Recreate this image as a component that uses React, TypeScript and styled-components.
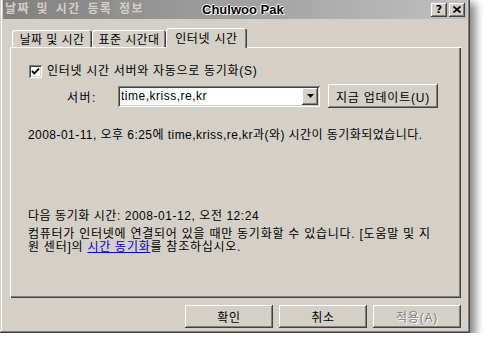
import React from "react";
import styled, { createGlobalStyle } from "styled-components";

const GlobalStyle = createGlobalStyle`
  html, body { margin: 0; padding: 0; background: #ffffff; overflow: hidden; }
  body { font-family: "Liberation Sans", "Noto Sans CJK KR", sans-serif; font-size: 12px; color: #000; }
`;

const raised = `
  box-shadow: inset -1px -1px #404040, inset 1px 1px #ffffff, inset -2px -2px #808080, inset 2px 2px #d4d0c8;
`;
const sunken = `
  box-shadow: inset 1px 1px #808080, inset -1px -1px #ffffff, inset 2px 2px #404040, inset -2px -2px #d4d0c8;
`;

const Window = styled.div`
  width: 470px;
  height: 336px;
  margin-top: -3px;
  box-sizing: border-box;
  padding: 3px;
  background: #d4d0c8;
  box-shadow: inset -1px -1px #404040, inset 1px 1px #d4d0c8, inset -2px -2px #808080, inset 2px 2px #ffffff,
    6px 6px 8px rgba(0, 0, 0, 0.45);
  display: flex;
  flex-direction: column;
`;

const TitleBar = styled.div`
  height: 19px;
  background: linear-gradient(to right, #808080, #c0c0c0);
  display: grid;
  grid-template-columns: 197px 1fr auto;
  align-items: center;
  padding: 0 2px 0 2px;
`;

const TitleText = styled.span`
  color: #d4d0c8;
  font-weight: bold;
  font-size: 12px;
  letter-spacing: 1.4px;
  word-spacing: 2px;
  white-space: nowrap;
  line-height: 19px;
`;

const OwnerName = styled.span`
  font-family: "Liberation Sans", sans-serif;
  font-weight: bold;
  font-size: 13px;
  color: #000;
  text-shadow: 1px 1px 0 #ffffff, -1px 0 0 #ffffff, 0 -1px 0 #ffffff;
  white-space: nowrap;
`;

const TitleButtons = styled.div`
  display: flex;
  gap: 2px;
`;

const TitleButton = styled.div`
  width: 16px;
  height: 14px;
  background: #d4d0c8;
  ${raised}
  display: flex;
  align-items: center;
  justify-content: center;
  font-family: "DejaVu Sans", sans-serif;
  font-weight: bold;
  font-size: 11px;
  line-height: 14px;
`;

const Body = styled.div`
  flex: 1;
  display: flex;
  flex-direction: column;
  padding: 9px 6px 0 7px;
  letter-spacing: 0.55px;
`;

const TabRow = styled.div`
  display: flex;
  align-items: flex-end;
  padding-left: 2px;
  height: 19px;
  position: relative;
  z-index: 1;
`;

const Tab = styled.div<{ $w: number; $active?: boolean }>`
  width: ${(p) => p.$w}px;
  height: ${(p) => (p.$active ? 20 : 17)}px;
  margin-bottom: ${(p) => (p.$active ? -1 : 0)}px;
  box-sizing: border-box;
  background: #d4d0c8;
  border-radius: 3px 3px 0 0;
  box-shadow: inset 1px 1px #ffffff, inset -1px 0 #404040, inset -2px 0 #808080;
  display: flex;
  align-items: center;
  justify-content: center;
  padding-bottom: ${(p) => (p.$active ? 2 : 0)}px;
  white-space: nowrap;
  font-size: 12px;
  letter-spacing: ${(p) => (p.$active ? 0.7 : 0.4)}px;
`;

const Panel = styled.div`
  height: 251px;
  box-sizing: border-box;
  background: #d4d0c8;
  box-shadow: inset 1px 1px #ffffff, inset -1px -1px #404040, inset -2px -2px #808080;
  display: flex;
  flex-direction: column;
  padding: 0 0 0 18px;
`;

const CheckRow = styled.label`
  margin-top: 18px;
  height: 13px;
  display: flex;
  align-items: center;
  gap: 5px;
  padding-left: 1px;
  white-space: nowrap;
  letter-spacing: 0.7px;
`;

const CheckBox = styled.span`
  width: 13px;
  height: 13px;
  flex: none;
  background: #ffffff;
  ${sunken}
  display: flex;
  align-items: center;
  justify-content: center;
`;

const Text = styled.span`
  line-height: 13px;
  white-space: nowrap;
`;

const ServerRow = styled.div`
  margin-top: 6px;
  height: 24px;
  display: flex;
  align-items: center;
`;

const FieldLabel = styled.span`
  width: 51px;
  margin-left: 39px;
  letter-spacing: 1.5px;
  white-space: nowrap;
`;

const Combo = styled.div`
  width: 202px;
  height: 21px;
  box-sizing: border-box;
  background: #ffffff;
  ${sunken}
  display: flex;
  align-items: center;
  padding: 2px;
`;

const ComboValue = styled.span`
  flex: 1;
  padding-left: 1px;
  white-space: nowrap;
  letter-spacing: 0.5px;
`;

const ComboArrow = styled.div`
  width: 16px;
  height: 17px;
  background: #d4d0c8;
  ${raised}
  display: flex;
  align-items: center;
  justify-content: center;
`;

const PushButton = styled.div<{ $w: number; $disabled?: boolean }>`
  width: ${(p) => p.$w}px;
  height: 23px;
  box-sizing: border-box;
  background: #d4d0c8;
  ${raised}
  display: flex;
  align-items: center;
  justify-content: center;
  white-space: nowrap;
  color: ${(p) => (p.$disabled ? "#808080" : "#000")};
  text-shadow: ${(p) => (p.$disabled ? "1px 1px 0 #ffffff" : "none")};
  letter-spacing: 0.8px;
`;

const UpdateButton = styled(PushButton)`
  margin-left: 8px;
  height: 24px;
`;

const Paragraph = styled.div<{ $mt: number; $ls?: number }>`
  margin-top: ${(p) => p.$mt}px;
  line-height: 13px;
  white-space: nowrap;
  letter-spacing: ${(p) => p.$ls ?? 0.55}px;
`;

const HelpLink = styled.span`
  color: #0000cc;
  text-decoration: underline;
`;

const ButtonBar = styled.div`
  display: flex;
  justify-content: flex-end;
  gap: 6px;
  margin-top: 7px;
`;

export default function App() {
  return (
    <>
      <GlobalStyle />
      <Window>
        <TitleBar>
          <TitleText>날짜 및 시간 등록 정보</TitleText>
          <OwnerName>Chulwoo Pak</OwnerName>
          <TitleButtons>
            <TitleButton>?</TitleButton>
            <TitleButton>
              <svg width="8" height="7" viewBox="0 0 8 7">
                <path d="M0.5 0.5 L7.5 6.5 M7.5 0.5 L0.5 6.5" stroke="#000" strokeWidth="1.8" />
              </svg>
            </TitleButton>
          </TitleButtons>
        </TitleBar>
        <Body>
          <TabRow>
            <Tab $w={80}>날짜 및 시간</Tab>
            <Tab $w={74}>표준 시간대</Tab>
            <Tab $w={81} $active>
              인터넷 시간
            </Tab>
          </TabRow>
          <Panel>
            <CheckRow>
              <CheckBox>
                <svg width="9" height="9" viewBox="0 0 9 9">
                  <path d="M1 4 L3.3 6.3 L8 1.6" stroke="#000" strokeWidth="1.9" fill="none" />
                </svg>
              </CheckBox>
              <Text>인터넷 시간 서버와 자동으로 동기화(S)</Text>
            </CheckRow>
            <ServerRow>
              <FieldLabel>서버:</FieldLabel>
              <Combo>
                <ComboValue>time,kriss,re,kr</ComboValue>
                <ComboArrow>
                  <svg width="7" height="4" viewBox="0 0 7 4">
                    <path d="M0 0 H7 L3.5 4 Z" fill="#000" />
                  </svg>
                </ComboArrow>
              </Combo>
              <UpdateButton $w={110}>지금 업데이트(U)</UpdateButton>
            </ServerRow>
            <Paragraph $mt={21} $ls={0.45}>
              2008-01-11, 오후 6:25에 time,kriss,re,kr과(와) 시간이 동기화되었습니다.
            </Paragraph>
            <Paragraph $mt={68}>다음 동기화 시간: 2008-01-12, 오전 12:24</Paragraph>
            <Paragraph $mt={5} $ls={0.75}>
              컴퓨터가 인터넷에 연결되어 있을 때만 동기화할 수 있습니다. [도움말 및 지
              <br />원 센터]의 <HelpLink>시간 동기화</HelpLink>를 참조하십시오.
            </Paragraph>
          </Panel>
          <ButtonBar>
            <PushButton $w={88}>확인</PushButton>
            <PushButton $w={88}>취소</PushButton>
            <PushButton $w={88} $disabled>
              적용(A)
            </PushButton>
          </ButtonBar>
        </Body>
      </Window>
    </>
  );
}
